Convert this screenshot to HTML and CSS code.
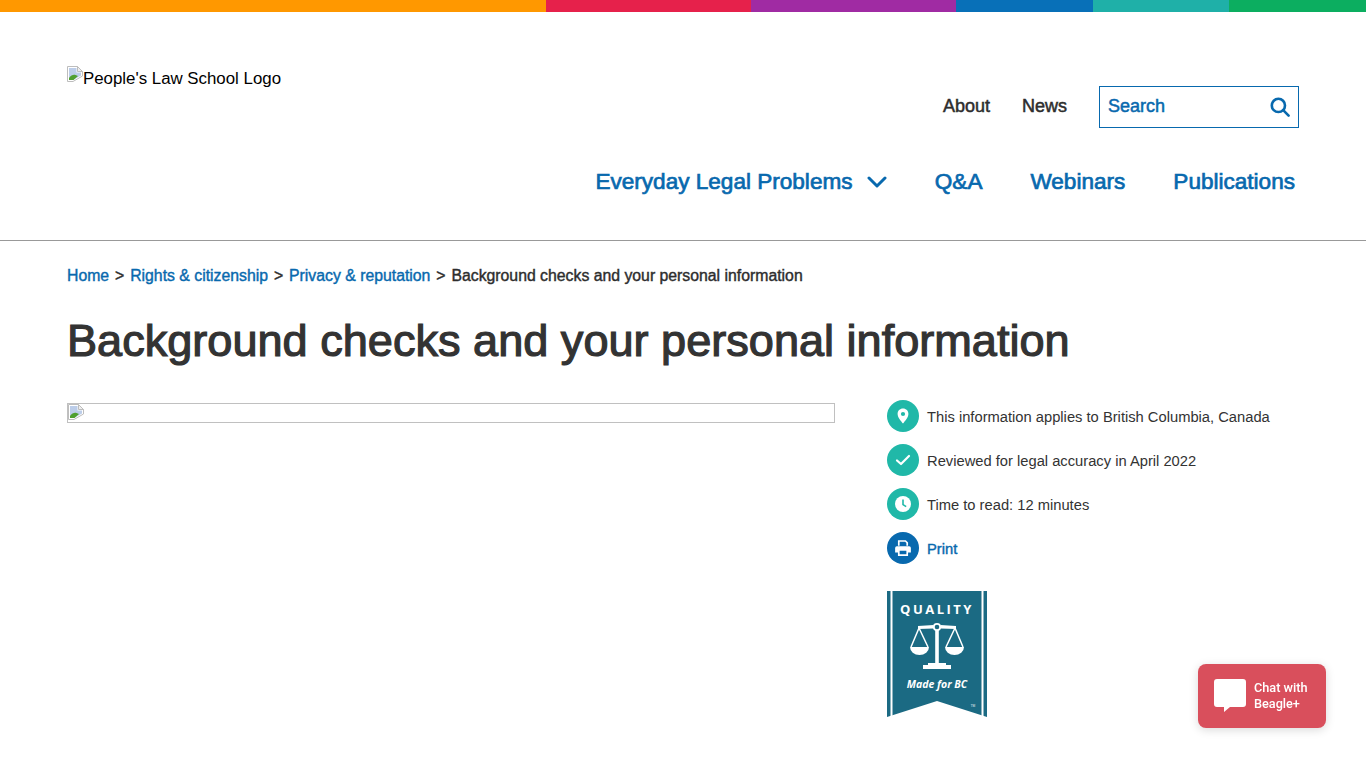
FILE: index.html

```html
<!DOCTYPE html>
<html lang="en">
<head>
    <meta charset="UTF-8">
    <meta name="viewport" content="width=device-width, initial-scale=1.0">
    <title>Background checks and your personal information</title>
    <link rel="stylesheet" href="styles.css">
</head>
<body>
    <div class="color-bar">
        <span class="bar-orange"></span>
        <span class="bar-red"></span>
        <span class="bar-purple"></span>
        <span class="bar-blue"></span>
        <span class="bar-teal"></span>
        <span class="bar-green"></span>
    </div>

    <header class="site-header">
        <a class="logo" href="#">
            <svg class="broken-icon" viewBox="0 0 16 16" width="16" height="16">
                <path d="M0.5 0.5H10.5L15.5 5.5V10L6 15.5H0.5Z" fill="#fff" stroke="#bdbdbd"/>
                <path d="M10.5 0.5V5.5H15.5Z" fill="#eee" stroke="#bdbdbd"/>
                <path d="M2 2H9.5V6.5H14V9.5L6 14H2Z" fill="#bccde9"/>
                <path d="M2 14V12C4 9 6.5 8.5 8.5 9L11 10L6.5 14Z" fill="#4f9f2f"/>
            </svg>People's Law School Logo
        </a>
        <div class="header-right">
            <div class="utility-nav">
                <a href="#">About</a>
                <a href="#">News</a>
                <div class="search-box">
                    <span>Search</span>
                    <svg viewBox="0 0 20 20" width="20" height="20" fill="none" stroke="#0869ae" stroke-width="2.6">
                        <circle cx="8.4" cy="8.4" r="6.6"/>
                        <path d="M13.2 13.2L18.6 18.6" stroke-linecap="round"/>
                    </svg>
                </div>
            </div>
            <nav class="main-nav">
                <a href="#" class="has-menu">Everyday Legal Problems
                    <svg viewBox="0 0 20 12" width="20" height="12" fill="none" stroke="#0869ae" stroke-width="3">
                        <path d="M2 2L10 10L18 2" stroke-linecap="round" stroke-linejoin="round"/>
                    </svg>
                </a>
                <a href="#">Q&amp;A</a>
                <a href="#">Webinars</a>
                <a href="#">Publications</a>
            </nav>
        </div>
    </header>

    <main class="page">
        <div class="breadcrumb">
            <a href="#">Home</a> <span>&gt;</span>
            <a href="#">Rights &amp; citizenship</a> <span>&gt;</span>
            <a href="#">Privacy &amp; reputation</a> <span>&gt;</span>
            Background checks and your personal information
        </div>

        <h1>Background checks and your personal information</h1>

        <div class="columns">
            <div class="article">
                <div class="broken-image">
                    <svg class="broken-icon" viewBox="0 0 16 16" width="16" height="16">
                        <path d="M0.5 0.5H10.5L15.5 5.5V10L6 15.5H0.5Z" fill="#fff" stroke="#bdbdbd"/>
                        <path d="M10.5 0.5V5.5H15.5Z" fill="#eee" stroke="#bdbdbd"/>
                        <path d="M2 2H9.5V6.5H14V9.5L6 14H2Z" fill="#bccde9"/>
                        <path d="M2 14V12C4 9 6.5 8.5 8.5 9L11 10L6.5 14Z" fill="#4f9f2f"/>
                    </svg>
                </div>
            </div>
            <aside class="sidebar">
                <div class="info-row">
                    <span class="circle">
                        <svg viewBox="0 0 16 16" width="16" height="16">
                            <path fill-rule="evenodd" fill="#fff" d="M8 0.5C4.8 0.5 2.6 2.9 2.6 5.9C2.6 9.4 6.2 13.2 8 15.5C9.8 13.2 13.4 9.4 13.4 5.9C13.4 2.9 11.2 0.5 8 0.5ZM8 3.9A2.1 2.1 0 1 1 8 8.1A2.1 2.1 0 1 1 8 3.9Z"/>
                        </svg>
                    </span>
                    <span class="info-text">This information applies to British Columbia, Canada</span>
                </div>
                <div class="info-row">
                    <span class="circle">
                        <svg viewBox="0 0 16 16" width="16" height="16" fill="none" stroke="#fff" stroke-width="2.2">
                            <path d="M2 8.5L6 12L14 4" stroke-linecap="round" stroke-linejoin="round"/>
                        </svg>
                    </span>
                    <span class="info-text">Reviewed for legal accuracy in April 2022</span>
                </div>
                <div class="info-row">
                    <span class="circle">
                        <svg viewBox="0 0 16 16" width="16" height="16">
                            <circle cx="8" cy="8" r="8" fill="#fff"/>
                            <path d="M8 3.5V8.6L11.2 10.6" fill="none" stroke="#20b8a8" stroke-width="1.6"/>
                        </svg>
                    </span>
                    <span class="info-text">Time to read: 12 minutes</span>
                </div>
                <div class="info-row">
                    <span class="circle circle-blue">
                        <svg viewBox="0 0 16 16" width="18" height="18">
                            <path fill="#fff" d="M3.5 1H10.5L12.5 3V6H11V3.6L9.9 2.5H5V6H3.5Z"/>
                            <path fill="#fff" fill-rule="evenodd" d="M2.5 6.5H13.5A1.5 1.5 0 0 1 15 8V12H12.5V15H3.5V12H1V8A1.5 1.5 0 0 1 2.5 6.5ZM5 10.5V13.5H11V10.5Z"/>
                        </svg>
                    </span>
                    <a href="#" class="info-text print-link">Print</a>
                </div>
                <svg class="badge" viewBox="0 0 100 126" width="100" height="126">
                    <path d="M0 0H100V126L50 110L0 126Z" fill="#1b6a83"/>
                    <rect x="3.5" y="0" width="2" height="126" fill="#fff"/>
                    <rect x="94.5" y="0" width="2" height="126" fill="#fff"/>
                    <text x="50" y="23" class="badge-title" text-anchor="middle">QUALITY</text>
                    <g fill="#fff">
                        <circle cx="50" cy="36" r="3.2" fill="none" stroke="#fff" stroke-width="1.8"/>
                        <rect x="48.2" y="39" width="3.6" height="35"/>
                        <rect x="41" y="72" width="18" height="2"/>
                        <rect x="36" y="74" width="28" height="4"/>
                        <path d="M31 35L46.5 34V37.5L31 38ZM53.5 34L69 35V38L53.5 37.5Z"/>
                        <path d="M23 56A9.5 8 0 0 0 42 56Z"/>
                        <path d="M58 56A9.5 8 0 0 0 77 56Z"/>
                        <path d="M32 37L24 56M32 37L41 56M68 37L59 56M68 37L76 56" fill="none" stroke="#fff" stroke-width="1.5"/>
                    </g>
                    <text x="50" y="97" class="badge-sub" text-anchor="middle">Made for BC</text>
                    <text x="86" y="116" class="badge-tm" text-anchor="middle">TM</text>
                </svg>
            </aside>
        </div>
    </main>

    <a href="#" class="chat-button">
        <svg viewBox="0 0 32 34" width="32" height="34">
            <path fill="#fff" d="M3 0H29A3 3 0 0 1 32 3V25A3 3 0 0 1 29 28H16L10 33V28H3A3 3 0 0 1 0 25V3A3 3 0 0 1 3 0Z"/>
        </svg>
        <span>Chat with<br>Beagle+</span>
    </a>
</body>
</html>
```

FILE: styles.css

```css
body {
    margin: 0;
    font-family: "Liberation Sans", Arial, sans-serif;
    color: #333;
    background-color: white;
    overflow: hidden;
}
a {
    color: #0869ae;
    text-decoration: none;
}
.color-bar {
    display: flex;
    height: 12px;
}
.color-bar span {
    flex: 1;
}
.color-bar .bar-orange { flex: 4; background-color: #ff9800; }
.color-bar .bar-red { flex: 1.5; background-color: #e6214b; }
.color-bar .bar-purple { flex: 1.5; background-color: #a02ba3; }
.color-bar .bar-blue { background-color: #0870b8; }
.color-bar .bar-teal { background-color: #1fb0a8; }
.color-bar .bar-green { background-color: #0cae60; }

.site-header {
    display: flex;
    justify-content: space-between;
    height: 228px;
    padding: 0 67px;
    border-bottom: 1px solid #999;
}
.logo {
    display: block;
    margin-top: 54px;
    color: black;
    font-size: 16.85px;
    line-height: 26px;
    height: 24px;
}
.broken-icon {
    display: inline-block;
    vertical-align: top;
}
.header-right {
    display: flex;
    flex-direction: column;
    align-items: flex-end;
    padding-top: 74px;
}
.utility-nav {
    display: flex;
    align-items: center;
    gap: 32px;
    font-size: 18px;
    -webkit-text-stroke: 0.5px;
}
.utility-nav a {
    color: #2d2d2d;
    padding-bottom: 2px;
}
.search-box {
    box-sizing: border-box;
    display: flex;
    align-items: center;
    justify-content: space-between;
    width: 200px;
    height: 42px;
    padding: 0 8px;
    border: 1px solid #0869ae;
    color: #0869ae;
}
.search-box span {
    padding-bottom: 2px;
}
.main-nav {
    display: flex;
    align-items: center;
    gap: 48px;
    margin-top: 41px;
    padding-right: 4px;
    font-size: 22.57px;
    -webkit-text-stroke: 0.7px;
}
.has-menu svg {
    margin-left: 8px;
    vertical-align: 1px;
}

.page {
    padding: 0 67px;
}
.breadcrumb {
    margin-top: 25px;
    font-size: 15.8px;
    line-height: 20px;
    color: #2d2d2d;
    -webkit-text-stroke: 0.4px;
}
.breadcrumb span {
    margin: 0 1.5px;
}
h1 {
    margin: 28px 0 0;
    font-size: 45.1px;
    line-height: 54px;
    font-weight: normal;
    -webkit-text-stroke: 1.2px;
}
.columns {
    display: flex;
    gap: 52px;
    margin-top: 32px;
}
.article {
    width: 768px;
    flex-shrink: 0;
}
.broken-image {
    box-sizing: border-box;
    height: 20px;
    margin-top: 3px;
    border: 1px solid #c0c0c0;
}
.sidebar {
    display: flex;
    flex-direction: column;
    gap: 12px;
    font-size: 14.72px;
}
.info-row {
    display: flex;
    align-items: center;
    gap: 8px;
    height: 32px;
}
.info-text {
    padding-top: 2px;
}
.circle {
    display: flex;
    align-items: center;
    justify-content: center;
    width: 32px;
    height: 32px;
    border-radius: 50%;
    background-color: #20b8a8;
}
.circle-blue {
    background-color: #0869ae;
}
.print-link {
    -webkit-text-stroke: 0.4px;
}
.badge {
    display: block;
    margin-top: 15px;
}
.badge-title {
    font-family: "Open Sans", sans-serif;
    font-size: 13px;
    font-weight: 700;
    letter-spacing: 2.5px;
    fill: white;
}
.badge-sub {
    font-family: "Open Sans", sans-serif;
    font-size: 10.5px;
    font-weight: 700;
    font-style: italic;
    fill: white;
}
.badge-tm {
    font-family: "Open Sans", sans-serif;
    font-size: 3px;
    fill: white;
}

.chat-button {
    position: fixed;
    left: 1198px;
    top: 664px;
    box-sizing: border-box;
    display: flex;
    align-items: center;
    gap: 8px;
    width: 128px;
    height: 64px;
    padding: 0 16px;
    border-radius: 8px;
    background-color: #d94f5c;
    box-shadow: 0 2px 10px rgba(0, 0, 0, 0.15);
    color: white;
    font-family: Roboto, sans-serif;
    font-size: 12.7px;
    font-weight: 500;
    line-height: 16px;
}
```
